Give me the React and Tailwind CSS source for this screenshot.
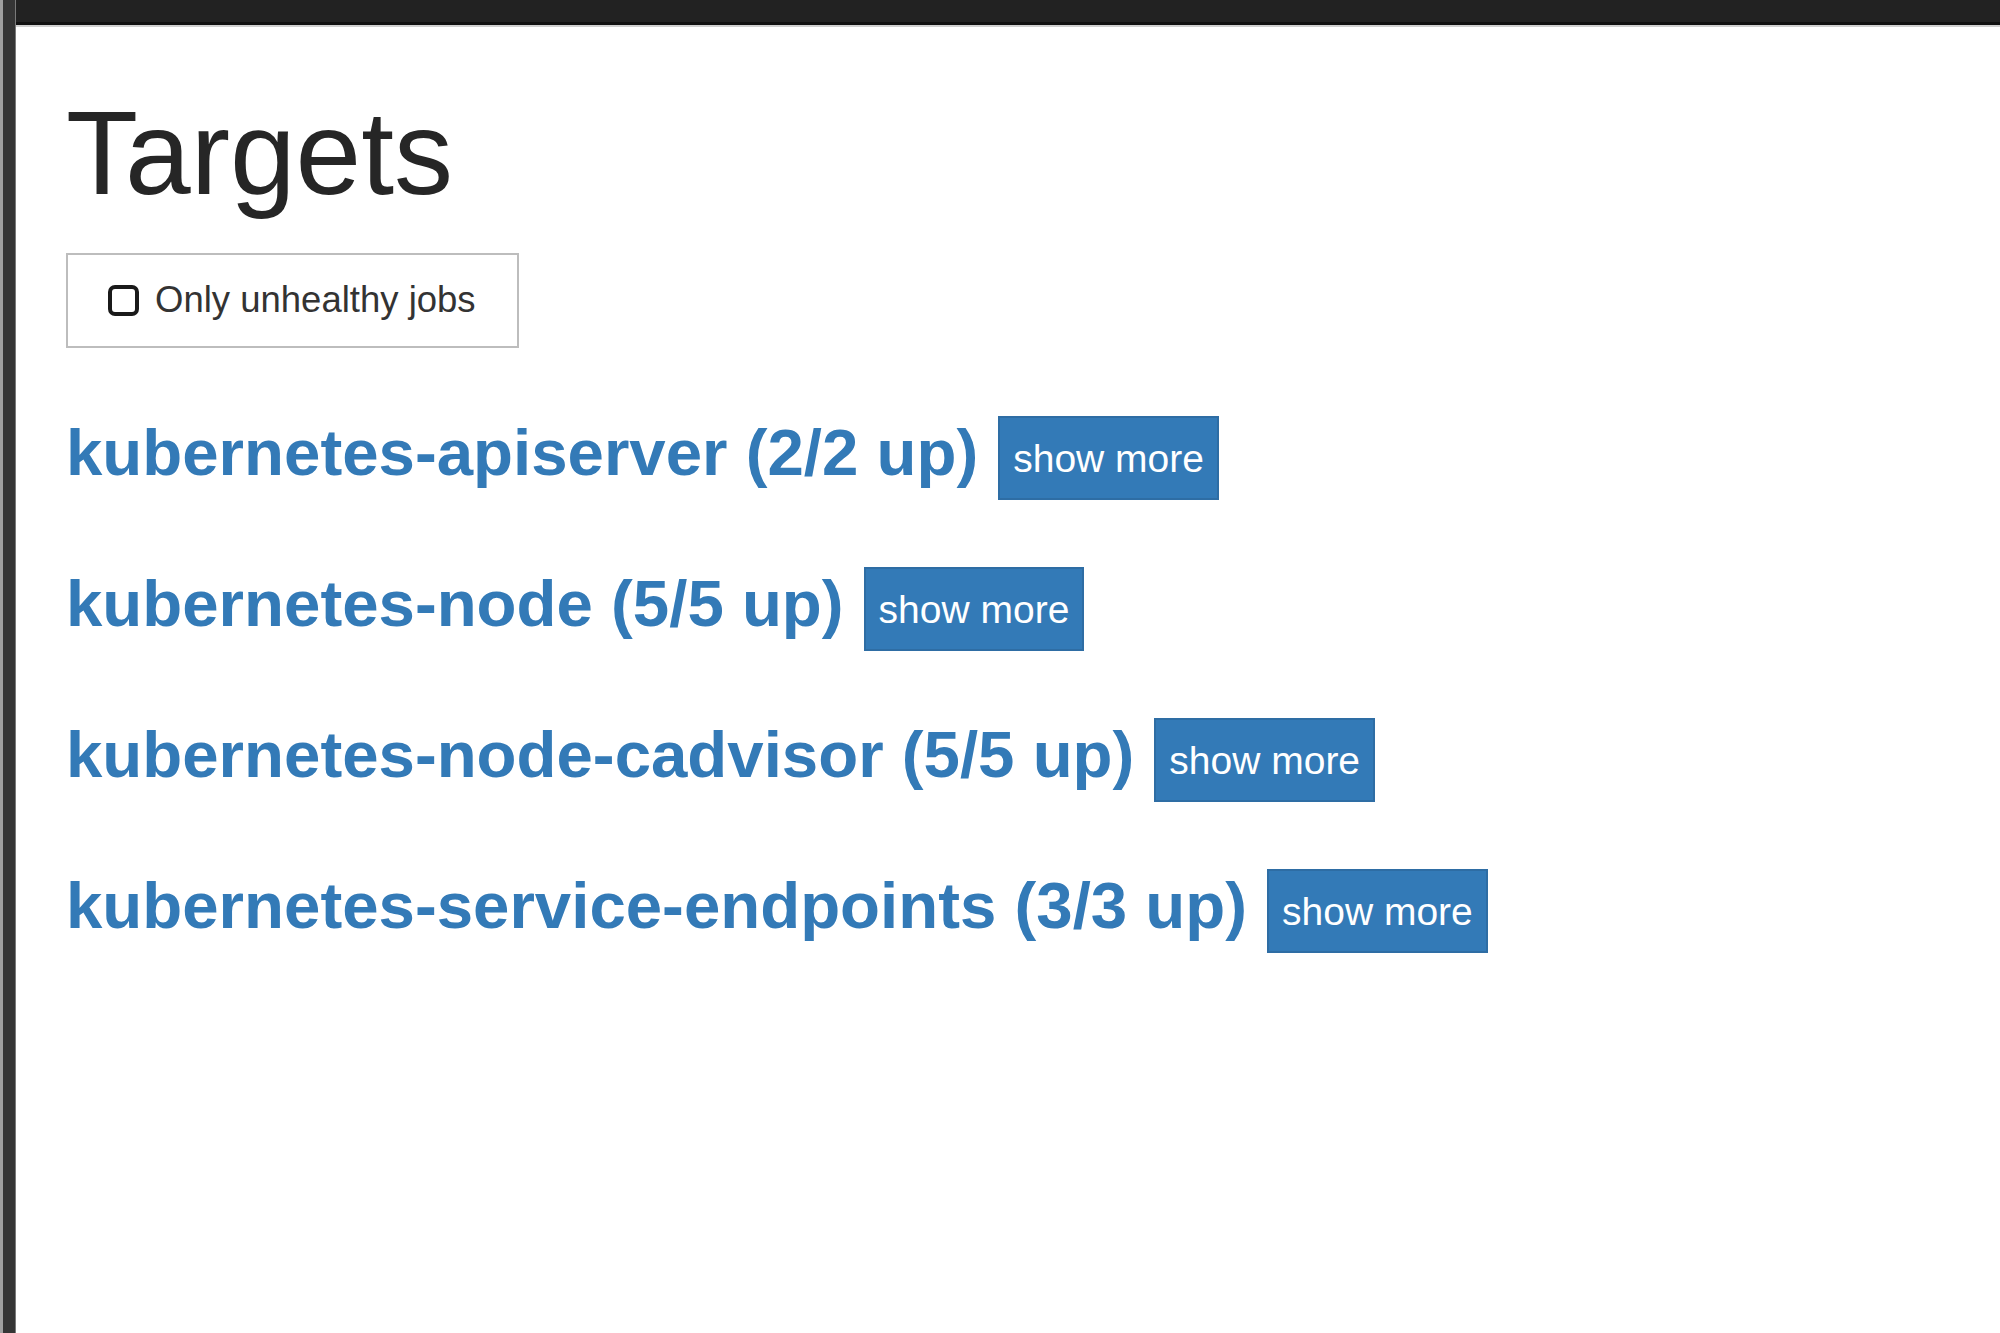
const jobs = [
  { name: 'kubernetes-apiserver', up: 2, total: 2 },
  { name: 'kubernetes-node', up: 5, total: 5 },
  { name: 'kubernetes-node-cadvisor', up: 5, total: 5 },
  { name: 'kubernetes-service-endpoints', up: 3, total: 3 },
]

function JobRow({ job }) {
  return (
    <div className="flex items-start gap-[20px]">
      <h2 className="text-[65.4px] font-bold leading-[83px] text-[#337ab7]">
        {job.name} ({job.up}/{job.total} up)
      </h2>
      <button className="mt-[5px] flex h-[84px] items-center border-2 border-[#2e6da4] bg-[#337ab7] px-[13px] pt-[1px] text-[39px] leading-none text-white">
        show more
      </button>
    </div>
  )
}

export default function App() {
  return (
    <div className="flex h-[1333px] bg-white font-['Liberation_Sans',Arial,sans-serif]">
      {/* window frame, left */}
      <div className="flex h-full w-[16px] shrink-0">
        <div className="w-[3px] bg-[#a0a0a0]" />
        <div className="w-[12px] bg-[#353535]" />
        <div className="w-[1px] bg-[#7a7a7a]" />
      </div>

      <div className="flex min-w-0 flex-1 flex-col">
        {/* window frame, top */}
        <div className="shrink-0">
          <div className="h-[22px] bg-[#222222]" />
          <div className="h-[3px] bg-[#111111]" />
          <div className="h-[2px] bg-[#d0d0d0]" />
        </div>

        <main className="pl-[50px] pt-[61px]">
          <h1 className="mb-[35px] text-[118px] font-normal leading-[130px] text-[#262626]">Targets</h1>

          <div className="flex flex-col gap-[62px]">
            <label className="mb-[1px] flex h-[95px] w-[453px] items-center gap-[16px] border-2 border-[#bdbdbd] pl-[40px] text-[36.5px] text-[#333]">
              <span className="h-[31px] w-[31px] shrink-0 rounded-[7px] border-[4px] border-[#1a1a1a]" />
              Only unhealthy jobs
            </label>

            {jobs.map((job) => (
              <JobRow key={job.name} job={job} />
            ))}
          </div>
        </main>
      </div>
    </div>
  )
}
